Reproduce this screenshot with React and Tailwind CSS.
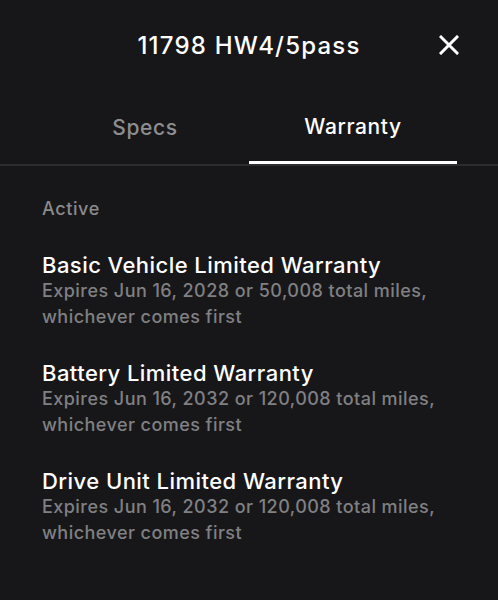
import React from 'react';

const warranties = [
  { title: 'Basic Vehicle Limited Warranty', expires: 'Jun 16, 2028', miles: '50,008' },
  { title: 'Battery Limited Warranty', expires: 'Jun 16, 2032', miles: '120,008' },
  { title: 'Drive Unit Limited Warranty', expires: 'Jun 16, 2032', miles: '120,008' },
];

export default function App() {
  return (
    <div
      className="w-[498px] h-[600px] bg-[#171719] text-white overflow-hidden"
      style={{ fontFamily: 'Inter, "Noto Sans", sans-serif' }}
    >
      {/* Header */}
      <div className="relative h-[92px] flex items-center justify-center">
        <h1 className="text-[24px] font-medium tracking-[1.2px]">11798 HW4/5pass</h1>
        <button className="absolute right-[37px] top-[33px] w-6 h-6 flex items-center justify-center">
          <svg width="20" height="20" viewBox="0 0 20 20" fill="none" stroke="white" strokeWidth="3" strokeLinecap="square">
            <path d="M2 2L18 18M18 2L2 18" />
          </svg>
        </button>
      </div>

      {/* Tabs */}
      <div className="border-b-2 border-[#2c2c2e]">
        <div className="flex px-[41px]">
          <div className="flex-1 h-[72px] flex items-center justify-center text-[21px] font-medium text-[#8e8e90] tracking-[0.6px]">
            Specs
          </div>
          <div className="flex-1 h-[72px] flex items-center justify-center text-[21px] font-medium text-white tracking-[0.6px] border-b-[3px] border-white -mb-[2px]">
            Warranty
          </div>
        </div>
      </div>

      {/* Content */}
      <div className="px-[42px] pt-[30px]">
        <div className="text-[18px] font-medium text-[#8a8a8c] tracking-[0.6px] leading-[26px]">Active</div>
        <div className="mt-[30px] flex flex-col gap-[30px]">
          {warranties.map((w) => (
            <div key={w.title}>
              <div className="text-[22px] font-medium leading-[26px] tracking-[0.45px]">{w.title}</div>
              <div className="text-[18px] font-medium leading-[26px] text-[#808083] tracking-[0.45px]">
                Expires {w.expires} or {w.miles} total miles,
                <br />
                whichever comes first
              </div>
            </div>
          ))}
        </div>
      </div>
    </div>
  );
}
